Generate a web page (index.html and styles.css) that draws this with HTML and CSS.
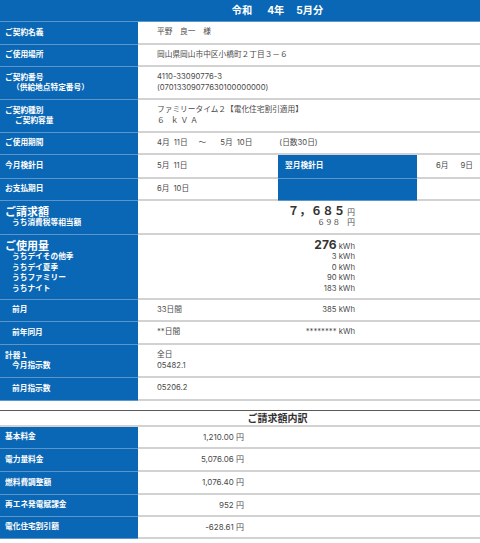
FILE: index.html
```html
<!DOCTYPE html>
<html lang="ja">
<head>
<meta charset="utf-8">
<title>ご請求内容</title>
<link rel="stylesheet" href="styles.css">
</head>
<body>
<div class="sheet">
  <div class="row title">
    <div class="cell"></div>
    <div class="cell c23 ttl">令和<i class="g1"></i>4年<i class="g2"></i>5月分</div>
    <div class="cell"></div>
  </div>

  <div class="row h23">
    <div class="cell lab">ご契約名義</div>
    <div class="cell val c24">平野　良一　様</div>
  </div>
  <div class="row h22">
    <div class="cell lab">ご使用場所</div>
    <div class="cell val c24">岡山県岡山市中区小橋町２丁目３－６</div>
  </div>
  <div class="row h33">
    <div class="cell lab"><span>ご契約番号</span><span class="in2">（供給地点特定番号）</span></div>
    <div class="cell val c24"><span>4110-33090776-3</span><span>(07013309077630100000000)</span></div>
  </div>
  <div class="row h33">
    <div class="cell lab"><span>ご契約種別</span><span class="in3">ご契約容量</span></div>
    <div class="cell val c24"><span>ファミリータイム２【電化住宅割引適用】</span><span class="kva">６ ｋＶＡ</span></div>
  </div>
  <div class="row h22">
    <div class="cell lab">ご使用期間</div>
    <div class="cell val c24 line"><span>4月</span><span class="s4">11日</span><span class="s11">～</span><span class="s14">5月</span><span class="s4">10日</span><span class="s22">(日数30日)</span></div>
  </div>
  <div class="row h24">
    <div class="cell lab">今月検針日</div>
    <div class="cell val line"><span>5月</span><span class="s4">11日</span></div>
    <div class="cell lab lab-mid">翌月検針日</div>
    <div class="cell val line"><span>6月</span><span class="s12">9日</span></div>
  </div>
  <div class="row h22">
    <div class="cell lab">お支払期日</div>
    <div class="cell val line"><span>6月</span><span class="s4">10日</span></div>
    <div class="cell lab lab-mid"></div>
    <div class="cell val"></div>
  </div>
  <div class="row h34">
    <div class="cell lab"><span class="big">ご請求額</span><span class="in1">うち消費税等相当額</span></div>
    <div class="cell val c24 amt">
      <span><b class="yen-big">７，６８５</b><span class="unit u1">円</span></span>
      <span><span class="yen-sm">６９８</span><span class="unit u2">円</span></span>
    </div>
  </div>
  <div class="row h65">
    <div class="cell lab"><span class="big">ご使用量</span><span class="in1">うちデイその他季</span><span class="in1">うちデイ夏季</span><span class="in1">うちファミリー</span><span class="in1">うちナイト</span></div>
    <div class="cell val c24 amt">
      <span><b class="kwh-big">276</b> kWh</span>
      <span>3 kWh</span>
      <span>0 kWh</span>
      <span>90 kWh</span>
      <span>183 kWh</span>
    </div>
  </div>
  <div class="row h22">
    <div class="cell lab"><span class="in1">前月</span></div>
    <div class="cell val c24 split"><span>33日間</span><span>385 kWh</span></div>
  </div>
  <div class="row h23">
    <div class="cell lab"><span class="in1">前年同月</span></div>
    <div class="cell val c24 split"><span>**日間</span><span>******** kWh</span></div>
  </div>
  <div class="row h33">
    <div class="cell lab"><span>計器１</span><span class="in1">今月指示数</span></div>
    <div class="cell val c24"><span>全日</span><span>05482.1</span></div>
  </div>
  <div class="row h23">
    <div class="cell lab"><span class="in1">前月指示数</span></div>
    <div class="cell val c24">05206.2</div>
  </div>

  <div class="spacer"></div>

  <div class="row sub-title">
    <div class="cell"></div>
    <div class="cell c23 st">ご請求額内訳</div>
    <div class="cell"></div>
  </div>
  <div class="row h22">
    <div class="cell lab">基本料金</div>
    <div class="cell val c24 fee">1,210.00 円</div>
  </div>
  <div class="row h23">
    <div class="cell lab">電力量料金</div>
    <div class="cell val c24 fee">5,076.06 円</div>
  </div>
  <div class="row h23">
    <div class="cell lab">燃料費調整額</div>
    <div class="cell val c24 fee">1,076.40 円</div>
  </div>
  <div class="row h22">
    <div class="cell lab">再エネ発電賦課金</div>
    <div class="cell val c24 fee">952 円</div>
  </div>
  <div class="row h22">
    <div class="cell lab">電化住宅割引額</div>
    <div class="cell val c24 fee">-628.61 円</div>
  </div>
</div>
</body>
</html>
```

FILE: styles.css
```css
* {
  box-sizing: border-box;
  margin: 0;
  padding: 0;
}

html, body {
  background: #ffffff;
}

body {
  margin: 0;
  width: 480px;
  height: 543px;
  overflow: hidden;
  font-family: "Inter", "Noto Sans CJK JP", sans-serif;
  font-size: 7.7px;
  line-height: 10.5px;
  color: #4a4a4a;
}

.sheet {
  width: 480px;
  display: flex;
  flex-direction: column;
}

.row {
  display: grid;
  grid-template-columns: 138px 140px 139px 63px;
}

.cell {
  display: flex;
  flex-direction: column;
  justify-content: center;
  min-width: 0;
  white-space: nowrap;
}

.c24 { grid-column: 2 / 5; }
.c23 { grid-column: 2 / 4; }

.h22 { height: 22px; }
.h23 { height: 23px; }
.h24 { height: 24px; }
.h33 { height: 33px; }
.h34 { height: 34px; }
.h65 { height: 65px; }

.lab {
  background: #0a67b5;
  color: #ffffff;
  font-weight: bold;
  padding-left: 5px;
  border-bottom: 1px solid #5c95c9;
}

.lab-mid {
  padding-left: 7px;
}

.val {
  background: #ffffff;
  padding-left: 19px;
  border-bottom: 2px solid #d2d2d2;
}

.title {
  height: 22px;
  background: #0a67b5;
  border-bottom: 1px solid #5c95c9;
}

.ttl {
  align-items: center;
  flex-direction: row;
  justify-content: center;
  color: #ffffff;
  font-weight: bold;
  font-size: 10.2px;
}

.g1 { display: inline-block; width: 15px; }
.g2 { display: inline-block; width: 12px; }

.in1 { padding-left: 7px; }
.in2 { padding-left: 7px; }
.in3 { padding-left: 10px; }

.big {
  font-size: 11px;
  line-height: 12px;
}

.kva {
  letter-spacing: 2px;
}

.line {
  flex-direction: row;
  align-items: center;
  justify-content: flex-start;
}

.s4 { margin-left: 4px; }
.s11 { margin-left: 11px; }
.s12 { margin-left: 12px; }
.s14 { margin-left: 14px; }
.s22 { margin-left: 27px; }

.amt {
  align-items: flex-end;
  padding-right: 125px;
}

.yen-big {
  font-size: 11.5px;
  line-height: 11px;
  color: #333333;
}

.yen-sm {
  font-size: 7.7px;
}

.unit.u1 { margin-left: 2px; }
.unit.u2 { margin-left: 7px; }

.kwh-big {
  font-size: 12px;
  line-height: 12px;
  color: #333333;
}

.split {
  flex-direction: row;
  align-items: center;
  justify-content: space-between;
  padding-right: 125px;
}

.spacer {
  height: 10px;
  border-bottom: 1px solid #5a5a5a;
}

.sub-title {
  height: 16px;
  border-bottom: 2px solid #d2d2d2;
}

.st {
  align-items: center;
  color: #333333;
  font-weight: bold;
  font-size: 10px;
}

.fee {
  align-items: flex-end;
  padding-right: 236px;
  font-size: 8px;
}
```
